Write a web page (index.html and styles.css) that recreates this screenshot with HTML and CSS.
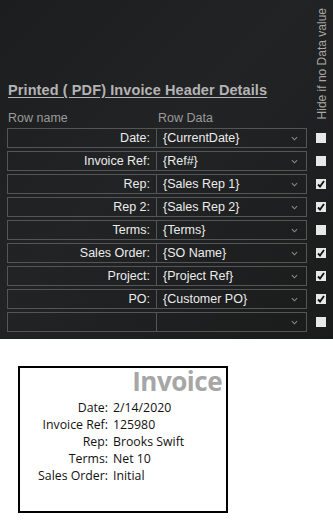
FILE: index.html
```html
<!DOCTYPE html>
<html lang="en">
<head>
    <meta charset="UTF-8">
    <title>Invoice Header Details</title>
    <link rel="stylesheet" href="styles.css">
</head>
<body>
<div class="panel">
    <div class="top">
        <h1 class="title">Printed ( PDF) Invoice Header Details</h1>
        <div class="col-labels">
            <span>Row name</span>
            <span>Row Data</span>
        </div>
    </div>
    <div class="side-label">Hide if no Data value</div>

    <div class="name">Date:</div>
    <div class="data">{CurrentDate}<svg class="chev" viewBox="0 0 8 5"><polyline points="1,1 4,4 7,1"/></svg></div>
    <div class="check"><span class="box"></span></div>

    <div class="name">Invoice Ref:</div>
    <div class="data">{Ref#}<svg class="chev" viewBox="0 0 8 5"><polyline points="1,1 4,4 7,1"/></svg></div>
    <div class="check"><span class="box"></span></div>

    <div class="name">Rep:</div>
    <div class="data">{Sales Rep 1}<svg class="chev" viewBox="0 0 8 5"><polyline points="1,1 4,4 7,1"/></svg></div>
    <div class="check"><span class="box"><svg viewBox="0 0 10 10"><polyline points="2,5.5 4,7.5 8,2"/></svg></span></div>

    <div class="name">Rep 2:</div>
    <div class="data">{Sales Rep 2}<svg class="chev" viewBox="0 0 8 5"><polyline points="1,1 4,4 7,1"/></svg></div>
    <div class="check"><span class="box"><svg viewBox="0 0 10 10"><polyline points="2,5.5 4,7.5 8,2"/></svg></span></div>

    <div class="name">Terms:</div>
    <div class="data">{Terms}<svg class="chev" viewBox="0 0 8 5"><polyline points="1,1 4,4 7,1"/></svg></div>
    <div class="check"><span class="box"></span></div>

    <div class="name">Sales Order:</div>
    <div class="data">{SO Name}<svg class="chev" viewBox="0 0 8 5"><polyline points="1,1 4,4 7,1"/></svg></div>
    <div class="check"><span class="box"><svg viewBox="0 0 10 10"><polyline points="2,5.5 4,7.5 8,2"/></svg></span></div>

    <div class="name">Project:</div>
    <div class="data">{Project Ref}<svg class="chev" viewBox="0 0 8 5"><polyline points="1,1 4,4 7,1"/></svg></div>
    <div class="check"><span class="box"><svg viewBox="0 0 10 10"><polyline points="2,5.5 4,7.5 8,2"/></svg></span></div>

    <div class="name">PO:</div>
    <div class="data">{Customer PO}<svg class="chev" viewBox="0 0 8 5"><polyline points="1,1 4,4 7,1"/></svg></div>
    <div class="check"><span class="box"><svg viewBox="0 0 10 10"><polyline points="2,5.5 4,7.5 8,2"/></svg></span></div>

    <div class="name"></div>
    <div class="data"><svg class="chev" viewBox="0 0 8 5"><polyline points="1,1 4,4 7,1"/></svg></div>
    <div class="check"><span class="box"></span></div>
</div>

<div class="preview">
    <div class="invoice">
        <div class="inv-title">Invoice</div>
        <div class="inv-rows">
            <span class="lbl">Date:</span><span>2/14/2020</span>
            <span class="lbl">Invoice Ref:</span><span>125980</span>
            <span class="lbl">Rep:</span><span>Brooks Swift</span>
            <span class="lbl">Terms:</span><span>Net 10</span>
            <span class="lbl">Sales Order:</span><span>Initial</span>
        </div>
    </div>
</div>
</body>
</html>
```

FILE: styles.css
```css
body {
    margin: 0;
    background: #fff;
    font-family: "Liberation Sans", Arial, sans-serif;
}
.panel {
    height: 339px;
    box-sizing: border-box;
    background: linear-gradient(135deg, #1c1d1e 0%, #222324 45%, #1a1b1b 100%);
    display: grid;
    grid-template-columns: 150px 150px 1fr;
    grid-template-rows: 125px;
    grid-auto-rows: 20px;
    row-gap: 3px;
    padding-left: 7px;
}
.top {
    grid-column: 1 / 3;
    display: flex;
    flex-direction: column;
    justify-content: flex-end;
}
.title {
    margin: 0 0 13px 1px;
    font-size: 14.5px;
    font-weight: bold;
    color: #b4b4b4;
    text-decoration: underline;
    text-underline-offset: 2px;
    letter-spacing: 0.1px;
    line-height: 16px;
}
.col-labels {
    display: grid;
    grid-template-columns: 150px 150px;
    font-size: 12.5px;
    color: #9a9a9a;
    line-height: 14px;
    padding-left: 1px;
}
.side-label {
    writing-mode: vertical-rl;
    transform: rotate(180deg);
    font-size: 12px;
    color: #a8a8a8;
    align-self: end;
    justify-self: start;
    margin: 0 0 6px 8px;
    line-height: 14px;
}
.name, .data {
    border: 1px solid #555;
    box-sizing: border-box;
    font-size: 12.5px;
    color: #ececec;
    display: flex;
    align-items: center;
}
.name {
    justify-content: flex-end;
    padding-right: 6px;
}
.data {
    padding-left: 6px;
    border-left: 1px solid #555;
    margin-left: -1px;
    width: 151px;
}
.chev {
    width: 7px;
    height: 5px;
    margin-left: auto;
    margin-right: 8px;
    fill: none;
    stroke: #8a8a8a;
    stroke-width: 1.2;
}
.check {
    display: flex;
    align-items: center;
    padding-left: 9px;
}
.box {
    width: 10px;
    height: 10px;
    background: #e8e8e8;
    display: block;
}
.box svg {
    width: 10px;
    height: 10px;
    display: block;
    fill: none;
    stroke: #111;
    stroke-width: 1.8;
}
.preview {
    padding: 27px 0 0 18px;
}
.invoice {
    width: 210px;
    height: 147px;
    box-sizing: border-box;
    border: 2px solid #000;
    font-family: "Open Sans", "Liberation Sans", sans-serif;
}
.inv-title {
    text-align: right;
    font-size: 26px;
    font-weight: bold;
    color: #a6a6a6;
    line-height: 26px;
    padding: 0 4px 0 0;
    letter-spacing: -0.5px;
}
.inv-rows {
    display: grid;
    grid-template-columns: 88px auto;
    column-gap: 5px;
    font-size: 12.3px;
    line-height: 17px;
    color: #111;
    margin-top: 5px;
}
.lbl {
    text-align: right;
}
```
